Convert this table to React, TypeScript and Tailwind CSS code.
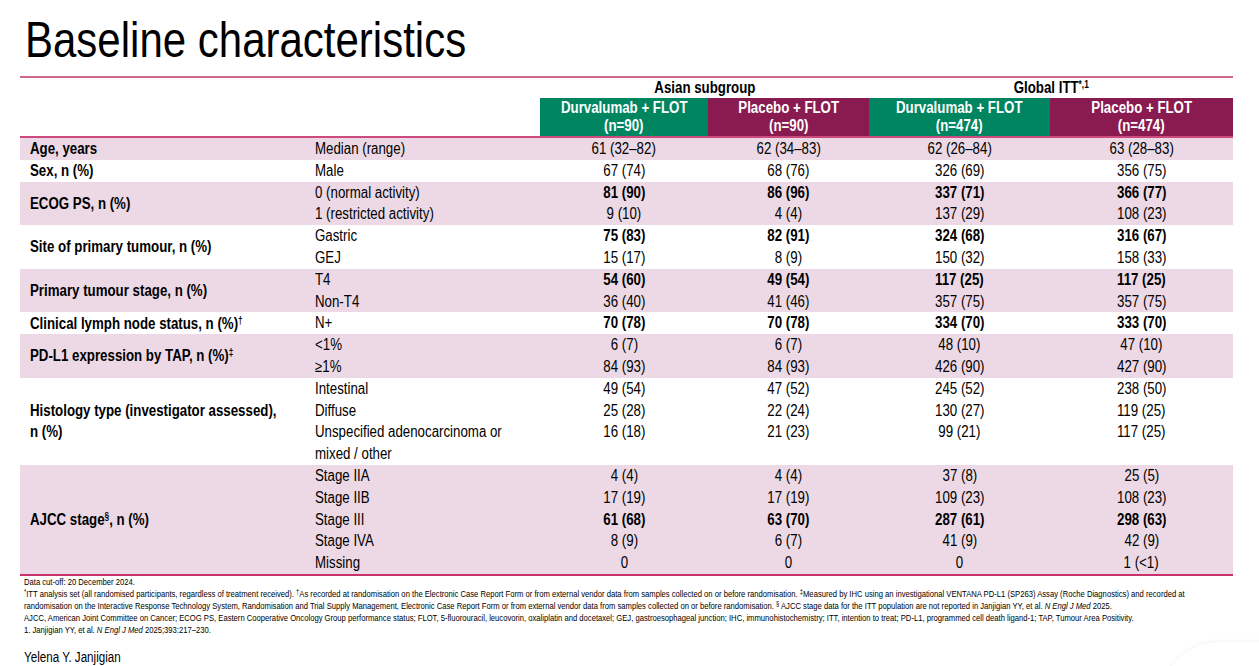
import React from "react"

type Line = { sub: React.ReactNode; vals: string[]; bold?: boolean }
type Group = { label: React.ReactNode; lines: Line[]; shaded: boolean }

// Arial Narrow is not available, so regular Liberation Sans is squeezed horizontally
function N({ children, center }: { children: React.ReactNode; center?: boolean }) {
  return (
    <span
      className={
        "inline-block whitespace-nowrap scale-x-[0.83] " + (center ? "origin-center" : "origin-left")
      }
    >
      {children}
    </span>
  )
}

const groups: Group[] = [
  {
    label: "Age, years",
    shaded: true,
    lines: [{ sub: "Median (range)", vals: ["61 (32–82)", "62 (34–83)", "62 (26–84)", "63 (28–83)"] }],
  },
  {
    label: "Sex, n (%)",
    shaded: false,
    lines: [{ sub: "Male", vals: ["67 (74)", "68 (76)", "326 (69)", "356 (75)"] }],
  },
  {
    label: "ECOG PS, n (%)",
    shaded: true,
    lines: [
      { sub: "0 (normal activity)", vals: ["81 (90)", "86 (96)", "337 (71)", "366 (77)"], bold: true },
      { sub: "1 (restricted activity)", vals: ["9 (10)", "4 (4)", "137 (29)", "108 (23)"] },
    ],
  },
  {
    label: "Site of primary tumour, n (%)",
    shaded: false,
    lines: [
      { sub: "Gastric", vals: ["75 (83)", "82 (91)", "324 (68)", "316 (67)"], bold: true },
      { sub: "GEJ", vals: ["15 (17)", "8 (9)", "150 (32)", "158 (33)"] },
    ],
  },
  {
    label: "Primary tumour stage, n (%)",
    shaded: true,
    lines: [
      { sub: "T4", vals: ["54 (60)", "49 (54)", "117 (25)", "117 (25)"], bold: true },
      { sub: "Non-T4", vals: ["36 (40)", "41 (46)", "357 (75)", "357 (75)"] },
    ],
  },
  {
    label: (
      <>
        Clinical lymph node status, n (%)<sup className="text-[10px]">†</sup>
      </>
    ),
    shaded: false,
    lines: [{ sub: "N+", vals: ["70 (78)", "70 (78)", "334 (70)", "333 (70)"], bold: true }],
  },
  {
    label: (
      <>
        PD-L1 expression by TAP, n (%)<sup className="text-[10px]">‡</sup>
      </>
    ),
    shaded: true,
    lines: [
      { sub: "<1%", vals: ["6 (7)", "6 (7)", "48 (10)", "47 (10)"] },
      { sub: "≥1%", vals: ["84 (93)", "84 (93)", "426 (90)", "427 (90)"] },
    ],
  },
  {
    label: (
      <>
        Histology type (investigator assessed),
        <br />n (%)
      </>
    ),
    shaded: false,
    lines: [
      { sub: "Intestinal", vals: ["49 (54)", "47 (52)", "245 (52)", "238 (50)"] },
      { sub: "Diffuse", vals: ["25 (28)", "22 (24)", "130 (27)", "119 (25)"] },
      { sub: "Unspecified adenocarcinoma or", vals: ["16 (18)", "21 (23)", "99 (21)", "117 (25)"] },
      { sub: "mixed / other", vals: ["", "", "", ""] },
    ],
  },
  {
    label: (
      <>
        AJCC stage<sup className="text-[10px]">§</sup>, n (%)
      </>
    ),
    shaded: true,
    lines: [
      { sub: "Stage IIA", vals: ["4 (4)", "4 (4)", "37 (8)", "25 (5)"] },
      { sub: "Stage IIB", vals: ["17 (19)", "17 (19)", "109 (23)", "108 (23)"] },
      { sub: "Stage III", vals: ["61 (68)", "63 (70)", "287 (61)", "298 (63)"], bold: true },
      { sub: "Stage IVA", vals: ["8 (9)", "6 (7)", "41 (9)", "42 (9)"] },
      { sub: "Missing", vals: ["0", "0", "0", "1 (<1)"] },
    ],
  },
]

function HeaderCell({ name, n, color }: { name: string; n: string; color: "green" | "purple" }) {
  return (
    <div
      className={
        (color === "green" ? "bg-[#008561]" : "bg-[#8a1b51]") +
        " flex flex-col items-center justify-center text-white font-bold text-[16px] leading-[18px]"
      }
    >
      <N center>{name}</N>
      <N center>{n}</N>
    </div>
  )
}

export default function App() {
  return (
    <div className="relative w-[1259px] h-[666px] overflow-hidden bg-white text-black font-['Liberation_Sans',Arial,sans-serif]">
      <div className="h-[76px] pl-[25px] pt-[15px]">
        <h1 className="inline-block origin-left scale-x-[0.84] whitespace-nowrap text-[50px] leading-[50px] font-normal">
          Baseline characteristics
        </h1>
      </div>
      <div className="ml-[20px] w-[1213px] h-[2px] bg-[#d3688f]" />

      <div className="ml-[20px] w-[1213px]">
        {/* group headers */}
        <div className="grid grid-cols-[520px_329px_364px] h-[20px] items-center text-[16px] font-bold leading-[20px]">
          <div />
          <div className="text-center">
            <N center>Asian subgroup</N>
          </div>
          <div className="text-center">
            <N center>
              Global ITT<sup className="text-[10px]">*,1</sup>
            </N>
          </div>
        </div>
        <div className="grid grid-cols-[295px_225px_168px_161px_181px_183px] h-[38px]">
          <div />
          <div />
          <HeaderCell name="Durvalumab + FLOT" n="(n=90)" color="green" />
          <HeaderCell name="Placebo + FLOT" n="(n=90)" color="purple" />
          <HeaderCell name="Durvalumab + FLOT" n="(n=474)" color="green" />
          <HeaderCell name="Placebo + FLOT" n="(n=474)" color="purple" />
        </div>
        <div className="h-[2px] bg-[#cc4a7e]" />

        {/* body */}
        <div className="text-[16px]">
          {groups.map((g, i) => (
            <div key={i} className={"flex " + (g.shaded ? "bg-[#ecd9e5]" : "bg-white")}>
              <div className="w-[295px] pl-[10px] flex items-center font-bold leading-[21px]">
                <N>{g.label}</N>
              </div>
              <div className="flex-1">
                {g.lines.map((l, j) => (
                  <div
                    key={j}
                    className="grid grid-cols-[225px_168px_161px_181px_183px] h-[21.8px] items-center leading-[21.8px]"
                  >
                    <div>
                      <N>{l.sub}</N>
                    </div>
                    {l.vals.map((v, k) => (
                      <div key={k} className={"text-center " + (l.bold ? "font-bold" : "")}>
                        <N center>{v}</N>
                      </div>
                    ))}
                  </div>
                ))}
              </div>
            </div>
          ))}
        </div>
        <div className="h-[2px] bg-[#c8336e]" />
      </div>

      {/* footnotes */}
      <div className="pl-[24px] text-[9px] leading-[12px]">
        <div className="origin-left scale-x-[0.85] whitespace-nowrap">
          <div>Data cut-off: 20 December 2024.</div>
          <div>
            <sup>*</sup>ITT analysis set (all randomised participants, regardless of treatment received).{" "}
            <sup>†</sup>As recorded at randomisation on the Electronic Case Report Form or from external vendor data
            from samples collected on or before randomisation. <sup>‡</sup>Measured by IHC using an investigational
            VENTANA PD-L1 (SP263) Assay (Roche Diagnostics) and recorded at
          </div>
          <div>
            randomisation on the Interactive Response Technology System, Randomisation and Trial Supply Management,
            Electronic Case Report Form or from external vendor data from samples collected on or before
            randomisation. <sup>§</sup> AJCC stage data for the ITT population are not reported in Janjigian YY, et
            al. <i>N Engl J Med</i> 2025.
          </div>
          <div>
            AJCC, American Joint Committee on Cancer; ECOG PS, Eastern Cooperative Oncology Group performance status;
            FLOT, 5-fluorouracil, leucovorin, oxaliplatin and docetaxel; GEJ, gastroesophageal junction; IHC,
            immunohistochemistry; ITT, intention to treat; PD-L1, programmed cell death ligand-1; TAP, Tumour Area
            Positivity.
          </div>
          <div>
            1. Janjigian YY, et al. <i>N Engl J Med</i> 2025;393:217–230.
          </div>
        </div>
      </div>
      <div className="pl-[24px] pt-[13px] text-[14px] leading-[16px]">
        <N>Yelena Y. Janjigian</N>
      </div>

      {/* faint overlay corner */}
      <div className="absolute left-[1160px] top-[642px] w-[260px] h-[120px] rounded-[70px] bg-white shadow-[0_0_5px_rgba(0,0,0,0.07)]" />
    </div>
  )
}
